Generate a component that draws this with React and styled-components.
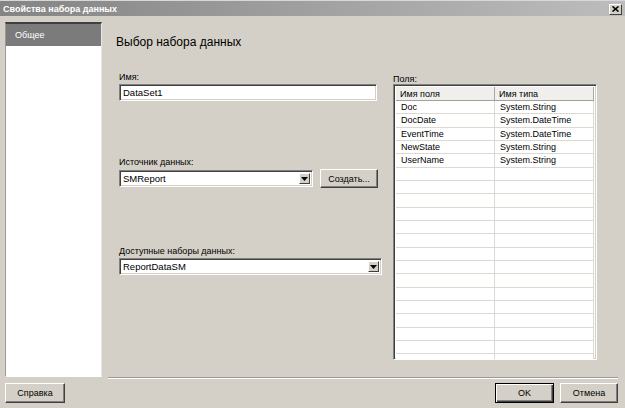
import styled, { createGlobalStyle } from 'styled-components';

const GlobalStyle = createGlobalStyle`
  html, body {
    margin: 0;
    padding: 0;
    background: #d4d0c8;
  }
  * {
    box-sizing: border-box;
  }
`;

const Window = styled.div`
  width: 625px;
  height: 408px;
  background: #d4d0c8;
  display: flex;
  flex-direction: column;
  font-family: 'Liberation Sans', Arial, sans-serif;
  font-size: 9px;
  color: #000;
  overflow: hidden;
`;

const TitleBar = styled.div`
  height: 16px;
  flex: none;
  display: flex;
  align-items: center;
  justify-content: space-between;
  padding: 0 3px 0 3px;
  background: linear-gradient(to right, #848484, #bdbdbd);
  border-top: 1px solid #d8d8d8;
`;

const Title = styled.div`
  color: #fff;
  font-weight: bold;
  font-size: 9px;
`;

const CloseButton = styled.div`
  width: 13px;
  height: 11px;
  margin-top: 1px;
  display: flex;
  align-items: center;
  justify-content: center;
  background: #d4d0c8;
  border: 1px solid;
  border-color: #fff #404040 #404040 #fff;
`;

const Main = styled.div`
  height: 357px;
  margin-top: 6px;
  display: flex;
  flex: none;
`;

const Sidebar = styled.div`
  width: 97px;
  height: 355px;
  margin-left: 5px;
  background: #fff;
  border-top: 2px solid #404040;
  border-left: 1px solid #9a9a9a;
  border-right: 1px solid #e8e8e8;
  border-bottom: 1px solid #fff;
`;

const SidebarItem = styled.div`
  height: 22px;
  background: #7b7b7b;
  color: #fff;
  padding-left: 9px;
  display: flex;
  align-items: center;
`;

const Content = styled.div`
  flex: 1;
  display: flex;
  flex-direction: column;
`;

const Heading = styled.div`
  font-size: 12px;
  line-height: 16px;
  margin: 12px 0 0 14px;
`;

const Columns = styled.div`
  display: flex;
  margin: 22px 0 0 17px;
`;

const FormColumn = styled.div`
  width: 263px;
  display: flex;
  flex-direction: column;
`;

const FieldLabel = styled.div`
  line-height: ${(p) => p.$lh || 11}px;
  height: ${(p) => p.$lh || 11}px;
  margin-top: ${(p) => p.$top || 0}px;
  margin-bottom: 1px;
`;

const Sunken = styled.div`
  height: 17px;
  background: #fff;
  border: 1px solid;
  border-color: #808080 #fff #fff #808080;
  box-shadow: inset 1px 1px 0 #404040, inset -1px -1px 0 #d4d0c8;
  display: flex;
  align-items: center;
  padding-left: 3px;
  font-size: 9.5px;
  width: ${(p) => p.$w || 258}px;
`;

const SelectBox = styled(Sunken)`
  justify-content: space-between;
  padding-right: 2px;
`;

const ArrowButton = styled.div`
  width: 11px;
  height: 11px;
  background: #d4d0c8;
  border: 1px solid;
  border-color: #fff #404040 #404040 #fff;
  display: flex;
  align-items: center;
  justify-content: center;
`;

const Row = styled.div`
  display: flex;
  align-items: center;
  gap: 7px;
`;

const Button = styled.div`
  width: ${(p) => p.$w}px;
  height: ${(p) => p.$h || 20}px;
  background: #d4d0c8;
  border: 1px solid;
  border-color: ${(p) => (p.$default ? '#000' : '#fff #404040 #404040 #fff')};
  box-shadow: ${(p) =>
    p.$default
      ? 'inset 1px 1px 0 #fff, inset -1px -1px 0 #404040, inset -2px -2px 0 #808080'
      : 'inset -1px -1px 0 #808080'};
  display: flex;
  align-items: center;
  justify-content: center;
`;

const FieldsColumn = styled.div`
  margin-left: 11px;
  display: flex;
  flex-direction: column;
`;

const Grid = styled.div`
  width: 204px;
  height: 276px;
  background: #fff;
  border: 1px solid;
  border-color: #808080 #fff #fff #808080;
  box-shadow: inset 1px 1px 0 #404040, inset -1px -1px 0 #d4d0c8;
  padding: 2px 2px 2px 2px;
  overflow: hidden;
`;

const GridRow = styled.div`
  display: grid;
  grid-template-columns: 99px 1fr;
  height: ${(p) => (p.$header ? 14 : 13.33)}px;
  background: ${(p) => (p.$header ? '#f0efec' : '#fff')};
  border-bottom: 1px solid ${(p) => (p.$header ? '#a0a0a0' : '#dcd9d2')};
`;

const Cell = styled.div`
  padding-left: ${(p) => (p.$header ? 4 : 5)}px;
  display: flex;
  align-items: center;
  border-right: 1px solid ${(p) => (p.$header ? '#a8a8a8' : '#dcd9d2')};
  white-space: nowrap;
  overflow: hidden;
`;

const Divider = styled.div`
  margin: auto 7px 0 6px;
  height: 2px;
  border-top: 1px solid #9a9a9a;
  border-bottom: 1px solid #fff;
`;

const Footer = styled.div`
  display: flex;
  justify-content: space-between;
  padding: 4px 7px 0 5px;
`;

const FooterGroup = styled.div`
  display: flex;
  gap: 6px;
`;

const fields = [
  ['Doc', 'System.String'],
  ['DocDate', 'System.DateTime'],
  ['EventTime', 'System.DateTime'],
  ['NewState', 'System.String'],
  ['UserName', 'System.String'],
];

const rows = [...fields, ...Array.from({ length: 16 }, () => ['', ''])];

function DownArrow() {
  return (
    <svg width="7" height="4" viewBox="0 0 7 4">
      <path d="M0 0h7L3.5 4z" fill="#000" />
    </svg>
  );
}

export default function App() {
  return (
    <Window>
      <GlobalStyle />
      <TitleBar>
        <Title>Свойства набора данных</Title>
        <CloseButton>
          <svg width="7" height="6" viewBox="0 0 7 6">
            <path d="M0.5 0.5L6.5 5.5M6.5 0.5L0.5 5.5" stroke="#000" strokeWidth="1.6" />
          </svg>
        </CloseButton>
      </TitleBar>
      <Main>
        <Sidebar>
          <SidebarItem>Общее</SidebarItem>
        </Sidebar>
        <Content>
          <Heading>Выбор набора данных</Heading>
          <Columns>
            <FormColumn>
              <FieldLabel>Имя:</FieldLabel>
              <Sunken>DataSet1</Sunken>
              <FieldLabel $top={56}>Источник данных:</FieldLabel>
              <Row>
                <SelectBox $w={194}>
                  SMReport
                  <ArrowButton>
                    <DownArrow />
                  </ArrowButton>
                </SelectBox>
                <Button $w={58} $h={19}>Создать...</Button>
              </Row>
              <FieldLabel $top={58}>Доступные наборы данных:</FieldLabel>
              <SelectBox $w={263}>
                ReportDataSM
                <ArrowButton>
                  <DownArrow />
                </ArrowButton>
              </SelectBox>
            </FormColumn>
            <FieldsColumn>
              <FieldLabel $lh={8} $top={3}>Поля:</FieldLabel>
              <Grid>
                <GridRow $header>
                  <Cell $header>Имя поля</Cell>
                  <Cell $header>Имя типа</Cell>
                </GridRow>
                {rows.map((r, i) => (
                  <GridRow key={i}>
                    <Cell>{r[0]}</Cell>
                    <Cell>{r[1]}</Cell>
                  </GridRow>
                ))}
              </Grid>
            </FieldsColumn>
          </Columns>
          <Divider />
        </Content>
      </Main>
      <Footer>
        <Button $w={60}>Справка</Button>
        <FooterGroup>
          <Button $w={59} $default>OK</Button>
          <Button $w={58}>Отмена</Button>
        </FooterGroup>
      </Footer>
    </Window>
  );
}
